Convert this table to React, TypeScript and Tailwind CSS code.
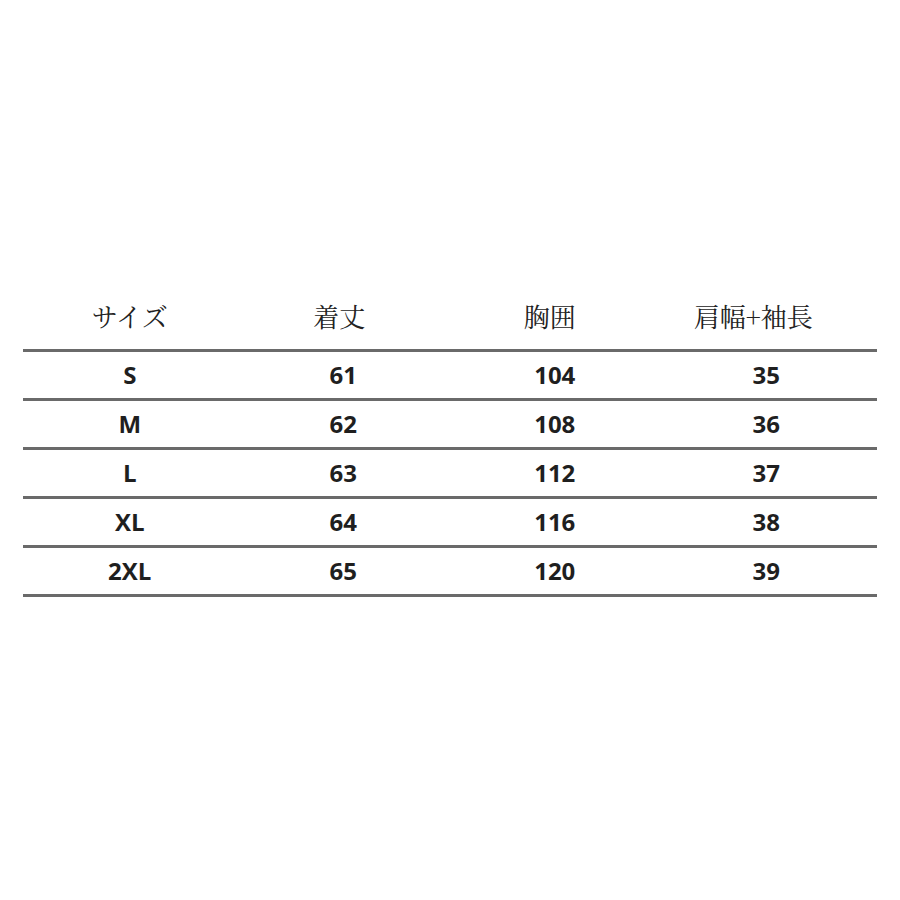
import React from "react";

const rows = [
  ["S", "61", "104", "35"],
  ["M", "62", "108", "36"],
  ["L", "63", "112", "37"],
  ["XL", "64", "116", "38"],
  ["2XL", "65", "120", "39"],
];

const headers = ["サイズ", "着丈", "胸囲", "肩幅+袖長"];

export default function App() {
  return (
    <div className="w-[900px] h-[900px] bg-white flex flex-col">
      <div className="mt-[294px] mx-[23px]">
        <div className="grid grid-cols-4 h-[55px] items-start pt-[2px] text-[26px] text-[#222]" style={{ fontFamily: '"Noto Serif CJK JP", "Liberation Serif", "Noto Sans CJK JP", serif' }}>
          {headers.map((h, i) => (
            <div key={i} className={"text-center " + (i === 3 ? "pr-[34px]" : i === 2 ? "pr-[14px]" : i === 1 ? "pr-[8px]" : "")}>
              {h}
            </div>
          ))}
        </div>
        <div className="border-t-[3px] border-[#6a6a6a]">
          {rows.map((r, ri) => (
            <div
              key={ri}
              className="grid grid-cols-4 h-[49px] items-center border-b-[3px] border-[#6a6a6a] text-[24px] font-bold text-[#1f1f1f]"
              style={{ fontFamily: '"Open Sans", "Noto Sans", sans-serif' }}
            >
              {r.map((c, ci) => (
                <div key={ci} className={"text-center " + (ci === 3 ? "pr-[8px]" : ci === 2 ? "pr-[4px]" : "")}>
                  {c}
                </div>
              ))}
            </div>
          ))}
        </div>
      </div>
    </div>
  );
}
